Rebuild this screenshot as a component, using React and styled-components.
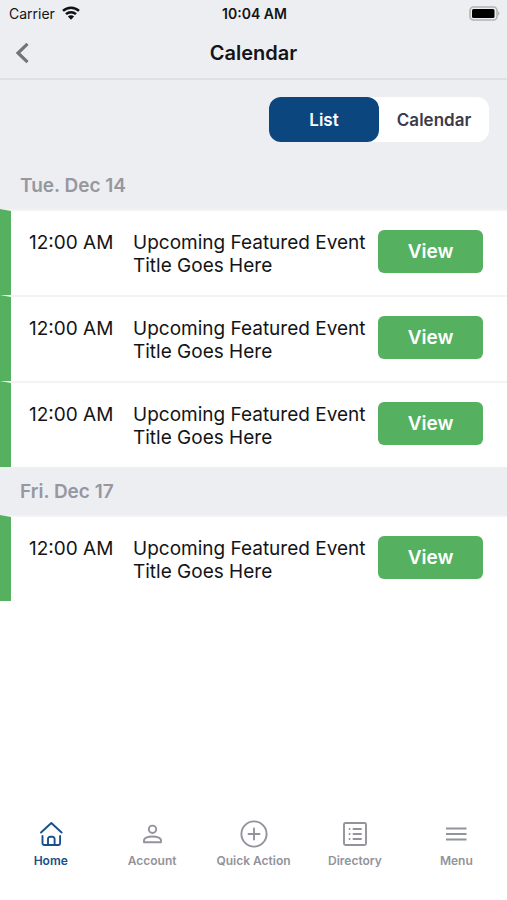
import React, { useState } from "react";
import styled, { createGlobalStyle } from "styled-components";

const GlobalStyle = createGlobalStyle`
  *, *::before, *::after { box-sizing: border-box; }
  body {
    margin: 0;
    background: #ffffff;
    color: #141416;
    font-family: Inter, "Liberation Sans", sans-serif;
  }
  button { font-family: inherit; border: 0; padding: 0; cursor: pointer; }
  h1, h2, p, ul { margin: 0; padding: 0; }
  ul { list-style: none; }
`;

const Screen = styled.div`
  display: flex;
  flex-direction: column;
  min-height: 100vh;
`;

const StatusBar = styled.div`
  display: grid;
  grid-template-columns: 1fr auto 1fr;
  align-items: center;
  height: 28px;
  padding: 0 7px 2px 9px;
  background: #edeef2;
  font-size: 14px;
`;

const Carrier = styled.span`
  display: flex;
  align-items: center;
  gap: 7px;
`;

const Clock = styled.time`
  font-weight: 600;
`;

const Battery = styled.svg`
  justify-self: end;
`;

const TitleBar = styled.header`
  display: grid;
  grid-template-columns: 44px 1fr 44px;
  align-items: center;
  height: 52px;
  background: #edeef2;
  border-bottom: 2px solid #dfe0e3;
`;

const BackButton = styled.button`
  display: grid;
  place-items: center;
  width: 44px;
  height: 44px;
  background: transparent;
`;

const Title = styled.h1`
  font-size: 20px;
  font-weight: 600;
  line-height: 24px;
  text-align: center;
`;

const Toolbar = styled.div`
  display: flex;
  justify-content: flex-end;
  padding: 17px 18px 19px;
  background: #edeef2;
`;

const Segments = styled.div`
  display: flex;
  background: #ffffff;
  border-radius: 12px;
`;

const Segment = styled.button`
  width: 110px;
  height: 45px;
  border-radius: 12px;
  background: ${(p) => (p.$active ? "#0c467e" : "transparent")};
  color: ${(p) => (p.$active ? "#ffffff" : "#3b3b49")};
  font-size: 17px;
  font-weight: 600;
`;

const DayHeading = styled.h2`
  height: 48px;
  padding-left: 20px;
  background: #edeef2;
  color: #96979f;
  font-size: 19px;
  font-weight: 600;
  line-height: 50px;
`;

const EventRow = styled.li`
  display: flex;
  align-items: flex-end;
  padding: 19px 24px 18px 18px;
  min-height: 86px;
  border-top: 2px solid #f3f3f4;
  border-left: 11px solid #55b160;
  font-size: 19px;
  line-height: 23px;
`;

const EventTime = styled.time`
  flex: 0 0 104px;
  align-self: stretch;
  padding-top: 1px;
`;

const EventTitle = styled.p`
  flex: 1;
  padding-right: 12px;
`;

const ViewButton = styled.button`
  flex: 0 0 105px;
  align-self: flex-start;
  height: 43px;
  border-radius: 6px;
  background: #55b160;
  color: #ffffff;
  font-size: 19px;
  font-weight: 600;
`;

const TabBar = styled.nav`
  display: flex;
  margin-top: auto;
  padding: 14px 0 31px;
`;

const Tab = styled.a`
  flex: 1 1 0;
  display: flex;
  flex-direction: column;
  align-items: center;
  gap: 4px;
  color: ${(p) => (p.$active ? "#17508a" : "#92939b")};
  font-size: 12px;
  font-weight: 600;
  line-height: 16px;
  text-decoration: none;
  white-space: nowrap;
`;

const TabIcon = styled.svg`
  width: 30px;
  height: 30px;
  fill: none;
  stroke: currentColor;
  stroke-width: 1.9;
  stroke-linecap: round;
  stroke-linejoin: round;
`;

const days = [
  { label: "Tue. Dec 14", count: 3 },
  { label: "Fri. Dec 17", count: 1 },
];

const tabs = [
  {
    label: "Home",
    icon: (
      <>
        <path d="M5 13.500 15.300 4l10.300 9.500" />
        <path d="M6.500 17v7.300a1.700 1.700 0 0 0 1.700 1.700h14.200a1.700 1.700 0 0 0 1.700-1.700V17" />
        <path d="M12 25.700V20a2.200 2.200 0 0 1 2.200-2.200h2.200a2.200 2.200 0 0 1 2.200 2.200v5.700" />
      </>
    ),
  },
  {
    label: "Account",
    icon: (
      <>
        <circle cx="15.500" cy="10.300" r="3.700" />
        <path d="M7 23.300v-1.800c0-2.700 4.600-4 8.500-4s8.500 1.300 8.500 4v1.800z" />
      </>
    ),
  },
  {
    label: "Quick Action",
    icon: (
      <>
        <circle cx="15" cy="15" r="12.600" />
        <path d="M15 9.500v11M9.500 15h11" />
      </>
    ),
  },
  {
    label: "Directory",
    icon: (
      <>
        <rect x="4" y="4" width="22" height="22" rx="1.500" />
        <path d="M13.500 10h7.500M13.500 15h7.500M13.500 20h7.500M9.500 10h.1M9.500 15h.1M9.500 20h.1" />
      </>
    ),
  },
  {
    label: "Menu",
    icon: (
      <path strokeLinecap="butt" strokeWidth="2.200" d="M5 9.500h20.500M5 15h20.500M5 20.500h20.500" />
    ),
  },
];

export default function App() {
  const [view, setView] = useState("List");

  return (
    <>
      <GlobalStyle />
      <Screen>
        <StatusBar>
          <Carrier>
            Carrier
            <svg width="18" height="14" viewBox="0 0 18 14" aria-hidden="true">
              <g fill="none" stroke="#111111" strokeWidth="2.500">
                <path d="M1 4.900a11.600 11.600 0 0 1 16 0" />
                <path d="M4 8.200a7.300 7.300 0 0 1 10 0" />
              </g>
              <path d="M9 13.800 5.900 10.600a4.400 4.400 0 0 1 6.200 0z" fill="#111111" />
            </svg>
          </Carrier>
          <Clock>10:04 AM</Clock>
          <Battery width="31" height="15" viewBox="0 0 31 15" role="img" aria-label="Battery full">
            <rect x="1" y="1" width="27" height="13" rx="3.500" fill="none" stroke="#b2b3b5" strokeWidth="1.600" />
            <rect x="3" y="3" width="22.500" height="9" rx="1.500" fill="#000000" />
            <path d="M29 5.300c1.800.5 1.800 3.900 0 4.400z" fill="#b2b3b5" />
          </Battery>
        </StatusBar>

        <TitleBar>
          <BackButton aria-label="Back">
            <svg width="14" height="22" viewBox="0 0 14 22" fill="none" stroke="#747476" strokeWidth="3.200">
              <path d="M12.500 1.800 3 11l9.500 9.200" />
            </svg>
          </BackButton>
          <Title>Calendar</Title>
        </TitleBar>

        <main>
          <Toolbar>
            <Segments role="group" aria-label="View mode">
              {["List", "Calendar"].map((name) => (
                <Segment
                  key={name}
                  $active={view === name}
                  aria-pressed={view === name}
                  onClick={() => setView(name)}
                >
                  {name}
                </Segment>
              ))}
            </Segments>
          </Toolbar>

          {days.map((day) => (
            <section key={day.label}>
              <DayHeading>{day.label}</DayHeading>
              <ul>
                {Array.from({ length: day.count }, (_, i) => (
                  <EventRow key={i}>
                    <EventTime>12:00 AM</EventTime>
                    <EventTitle>Upcoming Featured Event Title Goes Here</EventTitle>
                    <ViewButton>View</ViewButton>
                  </EventRow>
                ))}
              </ul>
            </section>
          ))}
        </main>

        <TabBar aria-label="Main">
          {tabs.map((tab) => (
            <Tab
              key={tab.label}
              href="#"
              $active={tab.label === "Home"}
              aria-current={tab.label === "Home" ? "page" : undefined}
            >
              <TabIcon viewBox="0 0 30 30" aria-hidden="true">
                {tab.icon}
              </TabIcon>
              {tab.label}
            </Tab>
          ))}
        </TabBar>
      </Screen>
    </>
  );
}
